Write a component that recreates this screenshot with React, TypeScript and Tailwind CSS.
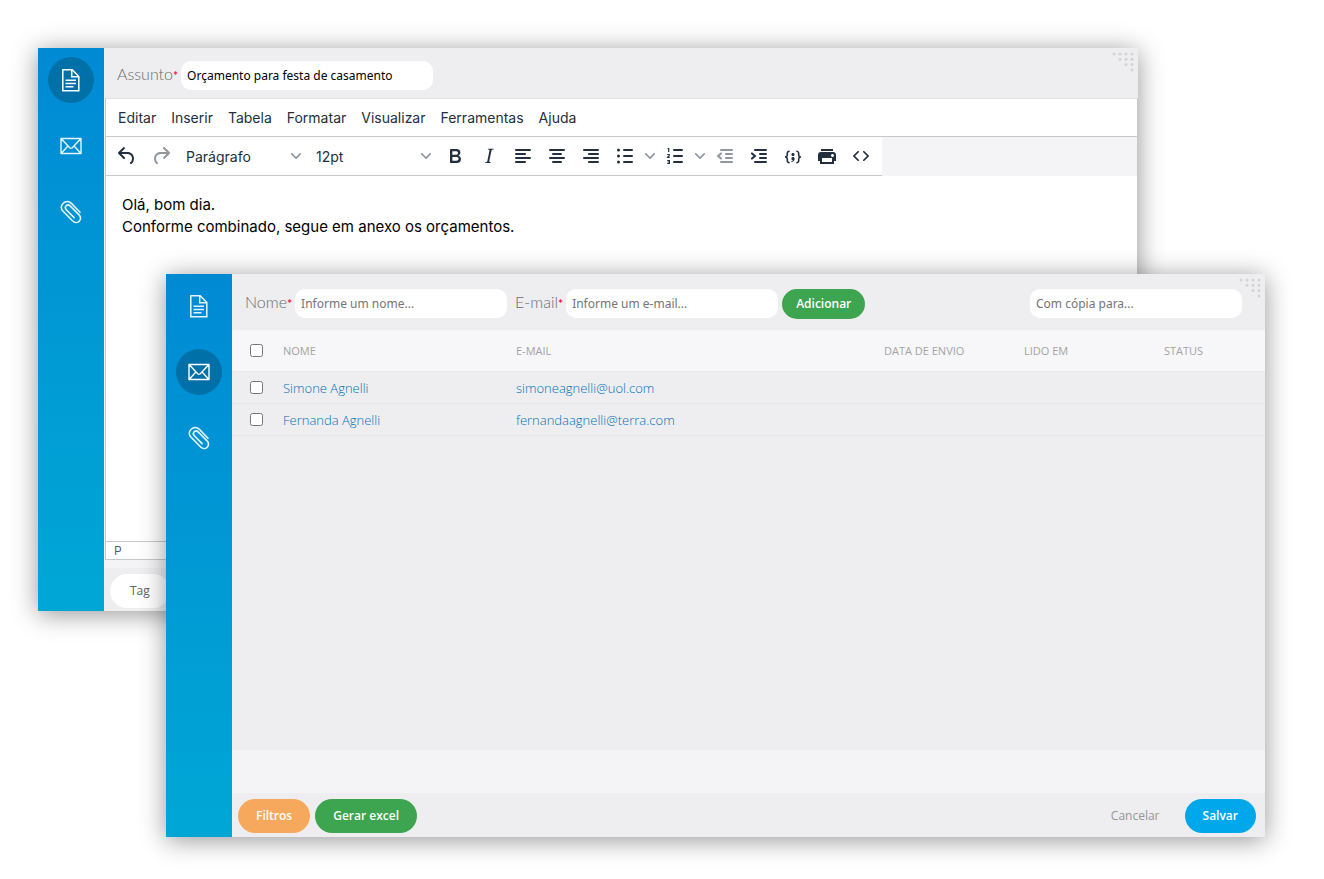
import React from "react";

const PATHS = {
  undo: "M6.4 8H12c3.7 0 6.2 2 6.8 5.1.6 2.7-.4 5.6-2.3 6.8a1 1 0 0 1-1-1.8c1.1-.6 1.8-2.7 1.4-4.6-.5-2.1-2.1-3.5-4.9-3.5H6.4l3.3 3.3a1 1 0 1 1-1.4 1.4l-5-5a1 1 0 0 1 0-1.4l5-5a1 1 0 0 1 1.4 1.4L6.4 8Z",
  redo: "M17.6 10H12c-2.8 0-4.4 1.4-4.9 3.5-.4 2 .3 4 1.4 4.6a1 1 0 1 1-1 1.8c-2-1.2-2.9-4.1-2.3-6.8.6-3 3-5.1 6.8-5.1h5.6l-3.3-3.3a1 1 0 1 1 1.4-1.4l5 5a1 1 0 0 1 0 1.4l-5 5a1 1 0 0 1-1.4-1.4l3.3-3.3Z",
  bold: "M7.8 19c-.3 0-.5 0-.6-.2l-.2-.5V5.7c0-.2 0-.4.2-.5l.6-.2h5c1.5 0 2.7.3 3.5 1 .7.6 1.1 1.4 1.1 2.5a3 3 0 0 1-.6 1.9c-.4.6-1 1-1.6 1.2.4.1.9.3 1.3.6s.8.7 1 1.2c.4.4.5 1 .5 1.6 0 1.3-.4 2.3-1.3 3-.8.7-2.1 1-3.8 1H7.8Zm5-8.3c.6 0 1.2-.1 1.6-.5.4-.3.6-.7.6-1.3 0-1.1-.8-1.7-2.3-1.7H9.3v3.5h3.4Zm.5 6c.7 0 1.3-.1 1.7-.4.4-.4.6-.9.6-1.5s-.2-1-.7-1.4c-.4-.3-1-.4-2-.4H9.4v3.8h4Z",
  italic: "m16.7 4.7-.1.9h-.3c-.6 0-1 0-1.4.3-.3.3-.4.6-.5 1.1l-2.1 9.8v.6c0 .5.4.8 1.4.8h.2l-.2.8H8l.2-.8h.2c1.1 0 1.8-.5 2-1.5l2-9.8.1-.5c0-.6-.4-.8-1.4-.8h-.3l.2-.9h5.8Z",
  codeSample: "M7.1 11a2.8 2.8 0 0 1-.8 2 2.8 2.8 0 0 1 .8 2v1.7c0 .3.1.6.4.8.2.3.5.4.8.4.3 0 .4.2.4.4v.8c0 .2-.1.4-.4.4-.7 0-1.4-.3-2-.8-.5-.6-.8-1.3-.8-2V15c0-.3-.1-.6-.4-.8-.2-.3-.5-.4-.8-.4a.4.4 0 0 1-.4-.4v-.8c0-.2.2-.4.4-.4.3 0 .6-.1.8-.4.3-.2.4-.5.4-.8V9.3c0-.7.3-1.4.8-2 .6-.5 1.3-.8 2-.8.3 0 .4.2.4.4v.8c0 .2-.1.4-.4.4-.3 0-.6.1-.8.4-.3.2-.4.5-.4.8V11Zm9.8 0V9.3c0-.3-.1-.6-.4-.8-.2-.3-.5-.4-.8-.4a.4.4 0 0 1-.4-.4V7c0-.2.1-.4.4-.4.7 0 1.4.3 2 .8.5.6.8 1.3.8 2V11c0 .3.1.6.4.8.2.3.5.4.8.4.2 0 .4.2.4.4v.8c0 .2-.2.4-.4.4-.3 0-.6.1-.8.4-.3.2-.4.5-.4.8v1.7c0 .7-.3 1.4-.8 2-.6.5-1.3.8-2 .8a.4.4 0 0 1-.4-.4v-.8c0-.2.1-.4.4-.4.3 0 .6-.1.8-.4.3-.2.4-.5.4-.8V15a2.8 2.8 0 0 1 .8-2 2.8 2.8 0 0 1-.8-2Zm-3.3-.4c0 .4-.1.8-.5 1.1-.3.3-.7.5-1.1.5-.4 0-.8-.2-1.1-.5-.4-.3-.5-.7-.5-1.1 0-.5.1-.9.5-1.2.3-.3.7-.4 1.1-.4.4 0 .8.1 1.1.4.4.3.5.7.5 1.2ZM12 13c.4 0 .8.1 1.1.5.4.3.5.7.5 1.1 0 1-.1 1.6-.5 2a3 3 0 0 1-1.1 1c-.4.3-.8.4-1.1.4a.5.5 0 0 1-.5-.5V17a3 3 0 0 0 1-.2l.6-.6c-.6 0-1-.2-1.3-.5-.2-.3-.3-.7-.3-1 0-.5.1-1 .5-1.2.3-.4.7-.5 1.1-.5Z",
  print: "M18 8H6a3 3 0 0 0-3 3v6h2v3h14v-3h2v-6a3 3 0 0 0-3-3Zm-1 10H7v-4h10v4Zm.5-5c-.8 0-1.5-.7-1.5-1.5s.7-1.5 1.5-1.5 1.5.7 1.5 1.5-.7 1.5-1.5 1.5Zm.5-8H6v2h12V5Z",
  source: "M9.8 15.7c.3.3.3.8 0 1-.3.4-.9.4-1.2 0l-4.4-4.1a.8.8 0 0 1 0-1.2l4.4-4.2c.3-.3.9-.3 1.2 0 .3.3.3.8 0 1.1L6 12l3.8 3.7Zm4.4 0c-.3.3-.3.8 0 1 .3.4.9.4 1.2 0l4.4-4.1c.3-.3.3-.8 0-1.2l-4.4-4.2a.8.8 0 0 0-1.2 0c-.3.3-.3.8 0 1.1L18 12l-3.8 3.7Z",
};

// Stroke drawings used for the line-based toolbar icons
const LINES = {
  alignLeft: "M5 6h14M5 10h9M5 14h14M5 18h9",
  alignCenter: "M5 6h14M8 10h8M5 14h14M8 18h8",
  alignRight: "M5 6h14M10 10h9M5 14h14M10 18h9",
  outdent: "M8 6h11M13 10h6M13 14h6M8 18h11M8 9.4 5 12l3 2.6",
  indent: "M8 6h11M13 10h6M13 14h6M8 18h11M5 9.4 8 12l-3 2.6",
};

function Glyph({ d }: { d: string }) {
  return (
    <svg viewBox="0 0 24 24" className="size-6" fill="currentColor" fillRule="evenodd" aria-hidden="true">
      <path d={d} />
    </svg>
  );
}

function LineGlyph({ d }: { d: string }) {
  return (
    <svg viewBox="0 0 24 24" className="size-6" fill="none" stroke="currentColor" strokeWidth="2" strokeLinecap="round" strokeLinejoin="round" aria-hidden="true">
      <path d={d} />
    </svg>
  );
}

function BulletGlyph() {
  return (
    <svg viewBox="0 0 24 24" className="size-6" fill="none" stroke="currentColor" strokeWidth="2" strokeLinecap="round" aria-hidden="true">
      <path d="M11 6h8M11 12h8M11 18h8" />
      <path strokeWidth="3" d="M5.5 6h.01M5.5 12h.01M5.5 18h.01" />
    </svg>
  );
}

function NumberGlyph() {
  return (
    <svg viewBox="0 0 24 24" className="size-6" fill="none" stroke="currentColor" strokeWidth="2" strokeLinecap="round" aria-hidden="true">
      <path d="M11 6h8M11 12h8M11 18h8" />
      <path strokeWidth="1.2" strokeLinecap="butt" d="M4.5 4.5h1.2V8M4.2 10.5h2v1.4l-1.8 1.5v.1h2.2M4.2 16.5h2.2v3H4.2M4.6 18h1.6" />
    </svg>
  );
}

function Chevron() {
  return (
    <svg viewBox="0 0 10 10" className="size-[10px] text-[#8d959e]" fill="currentColor" aria-hidden="true">
      <path d="M8.7 2.2c.3-.3.8-.3 1 0 .4.4.4.9 0 1.2L5.7 7.8c-.3.3-.9.3-1.2 0L.2 3.4a.8.8 0 0 1 0-1.2c.3-.3.8-.3 1.1 0L5 6l3.7-3.8Z" />
    </svg>
  );
}

function DocumentIcon() {
  return (
    <svg viewBox="0 0 24 24" className="size-6" fill="none" stroke="currentColor" strokeWidth="1.5" aria-hidden="true">
      <path d="M3.8 1.8h9.4l6.6 6.7v14.2H3.8ZM12.7 2v6.8H19.8M6.5 12.3h10.4M6.5 15.5h10.4M6.5 18.7h8" />
    </svg>
  );
}

function MailIcon() {
  return (
    <svg viewBox="0 0 24 24" className="size-6" fill="none" stroke="currentColor" strokeWidth="1.4" strokeLinejoin="round" aria-hidden="true">
      <path d="M2 4.5h20v15H2ZM2.3 4.8l8.4 9c.8.8 1.8.8 2.6 0l8.4-9M2.3 19.2l6.6-7.2M21.7 19.2l-6.6-7.2" />
    </svg>
  );
}

function ClipIcon() {
  return (
    <svg viewBox="0 0 24 24" className="size-6" fill="none" stroke="currentColor" strokeWidth="1.6" strokeLinecap="round" aria-hidden="true">
      <path d="M21 12.2 12.4 3.4C10 1 6.6.9 4.2 3.3S1.7 8.900 4.1 11.300l9.6 9.7c1.9 1.9 4.7 2 6.5.2s1.7-4.5-.1-6.3l-9-9c-1.1-1.1-2.8-1.2-3.9-.1s-1 2.8.1 3.9l7.8 7.9" />
    </svg>
  );
}

const SECTIONS = [
  { name: "Mensagem", icon: <DocumentIcon /> },
  { name: "Destinatários", icon: <MailIcon /> },
  { name: "Anexos", icon: <ClipIcon /> },
];

function Sidebar({ active }: { active: number }) {
  return (
    <nav className="flex w-[66px] shrink-0 flex-col items-center gap-5 bg-linear-to-b from-[#008ad4] to-[#00a7d5] pt-[9px]">
      {SECTIONS.map((s, i) => (
        <button
          key={s.name}
          type="button"
          aria-label={s.name}
          className={
            i === active
              ? "flex size-[46px] items-center justify-center rounded-full bg-[#0070a8] text-white"
              : "flex size-[46px] items-center justify-center rounded-full text-white/90"
          }
        >
          {s.icon}
        </button>
      ))}
    </nav>
  );
}

function Grip() {
  const dots = [0, 1, 2, 3].flatMap((row) => [0, 1, 2, 3].filter((c) => c >= row).map((c) => [c, row]));
  return (
    <svg viewBox="0 0 22 20" className="absolute top-1 right-1 h-5 w-[22px]" fill="#d3d3d6" aria-hidden="true">
      {dots.map(([c, r]) => (
        <circle key={`${c}-${r}`} cx={2 + c * 6} cy={2 + r * 5.3} r="1.5" />
      ))}
    </svg>
  );
}

function FieldLabel({ htmlFor, children }: { htmlFor: string; children: React.ReactNode }) {
  return (
    <label htmlFor={htmlFor} className="mr-[3px] pb-[3px] font-[Lato,sans-serif] text-base font-light text-[#6a6a6c]">
      {children}
      <span className="text-xs font-bold text-[#fa1440]">*</span>
    </label>
  );
}

function ToolButton({ label, muted, children }: { label: string; muted?: boolean; children: React.ReactNode }) {
  return (
    <button
      type="button"
      aria-label={label}
      disabled={muted}
      className={
        muted
          ? "flex h-[38px] w-[34px] items-center justify-center text-[#222f3e]/50"
          : "flex h-[38px] w-[34px] items-center justify-center text-[#222f3e]"
      }
    >
      {children}
    </button>
  );
}

function SplitButton({ label, children }: { label: string; children: React.ReactNode }) {
  return (
    <div className="flex">
      <ToolButton label={label}>{children}</ToolButton>
      <button type="button" aria-label={`${label}: opções`} className="flex w-4 items-center justify-center">
        <Chevron />
      </button>
    </div>
  );
}

function ToolSelect({ label, options }: { label: string; options: string[] }) {
  return (
    <div className="relative flex w-[130px] items-center">
      <select aria-label={label} className="h-[38px] w-full appearance-none bg-transparent pt-px pr-6 pl-2 text-sm text-[#222f3e]">
        {options.map((o) => (
          <option key={o}>{o}</option>
        ))}
      </select>
      <span className="pointer-events-none absolute right-[7px]">
        <Chevron />
      </span>
    </div>
  );
}

const MENUS = ["Editar", "Inserir", "Tabela", "Formatar", "Visualizar", "Ferramentas", "Ajuda"];

const WINDOW = "absolute flex shadow-[0_3px_24px_rgba(0,0,0,0.42)]";
const INPUT = "h-[29px] rounded-[10px] bg-white px-[6px] font-['Noto_Sans',sans-serif] text-xs text-black placeholder:text-[#757575]";
const PILL = "h-[34px] rounded-full font-['Open_Sans',sans-serif] text-xs";

function MessageWindow() {
  return (
    <section aria-label="Mensagem" className={`${WINDOW} top-12 right-[186px] left-[38px]`}>
      <Sidebar active={0} />
      <div className="relative flex min-w-0 flex-1 flex-col bg-[#f4f4f6]">
        <header className="flex h-[50px] items-center bg-[#eeeef0] pt-1 pl-[13px]">
          <FieldLabel htmlFor="assunto">Assunto</FieldLabel>
          <input id="assunto" type="text" defaultValue="Orçamento para festa de casamento" className={`${INPUT} w-[252px]`} />
        </header>
        <Grip />
        <div className="ml-px border border-[#c8c8ca] border-t-[#e2e2e4] font-[Inter,sans-serif]">
          <div className="flex h-[38px] items-center gap-px border-b border-[#c8c8ca] bg-white px-[5px] text-sm text-[#222f3e]">
            {MENUS.map((m) => (
              <button key={m} type="button" className="px-[7px]">
                {m}
              </button>
            ))}
          </div>
          <div role="toolbar" aria-label="Formatação" className="flex w-fit border-b border-[#c8c8ca] bg-white px-1">
            <ToolButton label="Desfazer"><Glyph d={PATHS.undo} /></ToolButton>
            <ToolButton label="Refazer" muted><Glyph d={PATHS.redo} /></ToolButton>
            <ToolSelect label="Estilo" options={["Parágrafo"]} />
            <ToolSelect label="Tamanho da fonte" options={["12pt"]} />
            <ToolButton label="Negrito"><Glyph d={PATHS.bold} /></ToolButton>
            <ToolButton label="Itálico"><Glyph d={PATHS.italic} /></ToolButton>
            <ToolButton label="Alinhar à esquerda"><LineGlyph d={LINES.alignLeft} /></ToolButton>
            <ToolButton label="Centralizar"><LineGlyph d={LINES.alignCenter} /></ToolButton>
            <ToolButton label="Alinhar à direita"><LineGlyph d={LINES.alignRight} /></ToolButton>
            <SplitButton label="Lista"><BulletGlyph /></SplitButton>
            <SplitButton label="Lista numerada"><NumberGlyph /></SplitButton>
            <ToolButton label="Diminuir recuo" muted><LineGlyph d={LINES.outdent} /></ToolButton>
            <ToolButton label="Aumentar recuo"><LineGlyph d={LINES.indent} /></ToolButton>
            <ToolButton label="Amostra de código"><Glyph d={PATHS.codeSample} /></ToolButton>
            <ToolButton label="Imprimir"><Glyph d={PATHS.print} /></ToolButton>
            <ToolButton label="Código fonte"><Glyph d={PATHS.source} /></ToolButton>
          </div>
          <textarea
            aria-label="Corpo da mensagem"
            className="block h-[365px] w-full resize-none bg-white px-4 pt-[18px] text-[15px] leading-[22px] text-black"
            defaultValue={"Olá, bom dia.\nConforme combinado, segue em anexo os orçamentos."}
          />
          <div className="flex h-[18px] items-center border-t border-[#c8c8ca] bg-white px-2 text-xs text-[#222f3e]/80">P</div>
        </div>
        <footer className="mt-2 flex h-[43px] items-center bg-[#eeeef0] pt-[2px] pl-[6px]">
          <button type="button" className={`${PILL} bg-white px-5 font-medium text-[#606060]`}>Tag</button>
        </footer>
      </div>
    </section>
  );
}

const PEOPLE = [
  { name: "Simone Agnelli", email: "simoneagnelli@uol.com" },
  { name: "Fernanda Agnelli", email: "fernandaagnelli@terra.com" },
];

function RecipientsWindow() {
  return (
    <section aria-label="Destinatários" className={`${WINDOW} top-[274px] right-[59px] left-[166px]`}>
      <Sidebar active={1} />
      <div className="relative flex min-w-0 flex-1 flex-col bg-[#eeeef0]">
        <header className="flex h-14 items-center pt-[3px] pr-[23px] pl-[13px]">
          <FieldLabel htmlFor="nome">Nome</FieldLabel>
          <input id="nome" type="text" placeholder="Informe um nome..." className={`${INPUT} mr-2 w-[212px]`} />
          <FieldLabel htmlFor="email">E-mail</FieldLabel>
          <input id="email" type="email" placeholder="Informe um e-mail..." className={`${INPUT} mr-1 w-[212px]`} />
          <button type="button" className="h-[30px] rounded-full bg-[#3da450] px-[14px] font-['Open_Sans',sans-serif] text-xs font-semibold text-white">
            Adicionar
          </button>
          <input type="email" aria-label="Com cópia para" placeholder="Com cópia para..." className={`${INPUT} ml-auto w-[212px]`} />
        </header>
        <Grip />
        <div className="min-h-[420px]">
          <table className="w-full table-fixed border-collapse text-left font-['Open_Sans',sans-serif]">
            <colgroup>
              <col className="w-[51px]" />
              <col className="w-[233px]" />
              <col />
              <col className="w-[140px]" />
              <col className="w-[140px]" />
              <col className="w-[101px]" />
            </colgroup>
            <thead>
              <tr className="h-[41px] border-b border-[#e7e7e9] bg-[#f7f7f9] text-[11px] text-[#a3a3a5]">
                <th className="pl-[18px]">
                  <input type="checkbox" aria-label="Selecionar todos" className="block size-[13px]" />
                </th>
                <th className="pt-[2px] font-normal">NOME</th>
                <th className="pt-[2px] font-normal">E-MAIL</th>
                <th className="pt-[2px] font-normal">DATA DE ENVIO</th>
                <th className="pt-[2px] font-normal">LIDO EM</th>
                <th className="pt-[2px] font-normal">STATUS</th>
              </tr>
            </thead>
            <tbody>
              {PEOPLE.map((p) => (
                <tr key={p.email} className="h-8 border-b border-[#e7e7e9] text-[13px] font-light text-[#0070b8]">
                  <td className="pl-[18px]">
                    <input type="checkbox" aria-label={`Selecionar ${p.name}`} className="block size-[13px]" />
                  </td>
                  <td className="pt-[3px]"><a href="#nome">{p.name}</a></td>
                  <td className="pt-[3px]"><a href={`mailto:${p.email}`}>{p.email}</a></td>
                  <td />
                  <td />
                  <td />
                </tr>
              ))}
            </tbody>
          </table>
        </div>
        <div className="h-[43px] bg-[#f4f4f6]" />
        <footer className="flex h-11 items-center gap-[5px] pt-px pr-[9px] pl-[6px]">
          <button type="button" className={`${PILL} bg-[#f6a85c] px-[18px] font-semibold text-white`}>Filtros</button>
          <button type="button" className={`${PILL} bg-[#3da450] px-[18px] font-semibold text-white`}>Gerar excel</button>
          <button type="button" className={`${PILL} ml-auto px-5 font-medium text-[#959595]`}>Cancelar</button>
          <button type="button" className={`${PILL} bg-[#00a7eb] px-[18px] font-semibold text-white`}>Salvar</button>
        </footer>
      </div>
    </section>
  );
}

export default function App() {
  return (
    <main className="relative min-h-screen overflow-hidden bg-white">
      <MessageWindow />
      <RecipientsWindow />
    </main>
  );
}
